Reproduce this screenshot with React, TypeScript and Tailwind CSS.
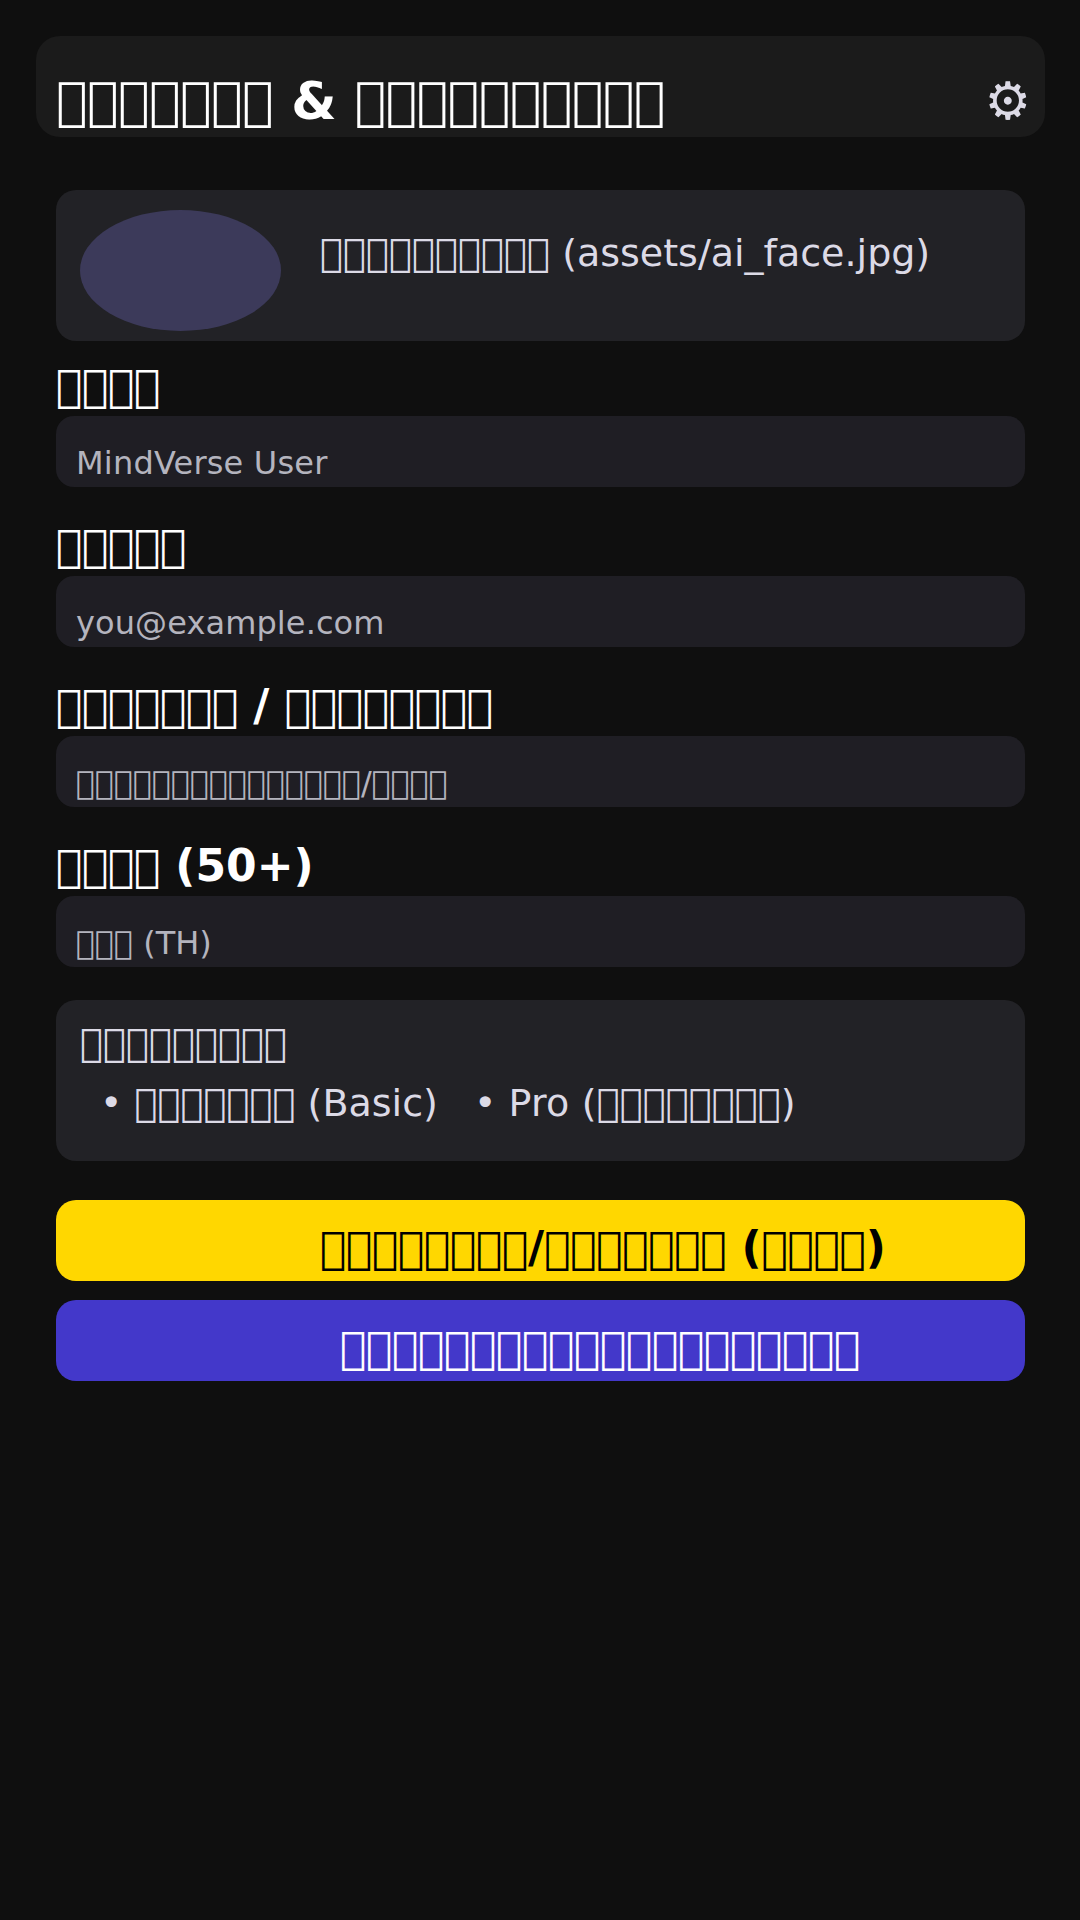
import type { ReactNode } from "react";

// A run of n missing-glyph boxes, drawn by the font itself.
function Boxes({ n, className }: { n: number; className: string }) {
  return <span className={className}>{"\uF8F0".repeat(n)}</span>;
}

const XL = "tracking-[-0.2px]";
const LG = "tracking-[-0.4px]";
const MD = "tracking-[0.2px]";
const SM = "tracking-[-0.2px]";

type FieldProps = { label: ReactNode; value: ReactNode };

function Field({ label, value }: FieldProps) {
  return (
    <div className="mb-[33px]">
      <div className="mb-1 h-[52px] text-[44px] leading-[52px] font-bold text-white">{label}</div>
      <div className="h-[71px] rounded-[18px] bg-[#1f1e24] pt-[27px] pl-5 text-[32px] leading-[40px] text-[#b4b4be]">
        {value}
      </div>
    </div>
  );
}

export default function App() {
  return (
    <div className="h-[1920px] w-[1080px] overflow-hidden bg-[#0f0f0f] pt-9 font-['DejaVu_Sans',sans-serif] whitespace-pre">
      <header className="mx-9 flex h-[101px] w-[1009px] justify-between rounded-[24px] bg-[#1b1b1b] pr-[14px] pl-5">
        <h1 className="mt-[35px] text-[52px] leading-[60px] font-bold text-white">
          <Boxes n={7} className={XL} />
          {" & "}
          <Boxes n={10} className={XL} />
        </h1>
        <button className="mt-[35px] flex h-[60px] text-[52px] leading-[60px] text-[#dcdae6]">⚙</button>
      </header>

      <main className="ml-14 w-[969px] pt-[53px]">
        <section className="mb-[19px] flex h-[151px] rounded-[20px] bg-[#222226] pt-5 pl-6 text-[38px] leading-[46px] text-[#dcdae6]">
          <div className="mr-[39px] h-[121px] w-[201px] shrink-0 rounded-[50%] bg-[#3c3a5a]" />
          <p className="pt-5">
            <Boxes n={10} className={MD} />
            {" (assets/ai_face.jpg)"}
          </p>
        </section>

        <Field label={<Boxes n={4} className={LG} />} value={<span className="tracking-[0.2px]">MindVerse User</span>} />
        <Field label={<Boxes n={5} className={LG} />} value={<span className="tracking-[0.1px]">you@example.com</span>} />
        <Field
          label={
            <>
              <Boxes n={7} className={LG} />
              {" / "}
              <Boxes n={8} className={LG} />
            </>
          }
          value={
            <>
              <Boxes n={15} className={SM} />/<Boxes n={4} className={SM} />
            </>
          }
        />
        <Field
          label={
            <>
              <Boxes n={4} className={LG} />
              {" (50+)"}
            </>
          }
          value={
            <>
              <Boxes n={3} className={SM} />
              {" (TH)"}
            </>
          }
        />

        <section className="mb-[39px] h-[161px] rounded-[20px] bg-[#222226] pt-5 pl-6 text-[38px] leading-[46px] text-[#dcdae6]">
          <h2>
            <Boxes n={9} className={MD} />
          </h2>
          <p className="mt-[14px] pl-5">
            {"• "}
            <Boxes n={7} className={MD} />
            {" (Basic)   • "}
            <span className="tracking-[0.2px]">{"Pro ("}</span>
            <Boxes n={8} className={MD} />)
          </p>
        </section>

        <button className="mb-[19px] block h-[81px] w-full rounded-[20px] bg-[#ffd700] pt-[22px] pb-[7px] pl-[264px] text-left text-[44px] leading-[52px] font-bold text-black">
          <Boxes n={8} className={LG} />/<Boxes n={7} className={LG} />
          {" ("}
          <Boxes n={4} className={LG} />)
        </button>
        <button className="block h-[81px] w-full rounded-[20px] bg-[#4338ca] pt-[22px] pb-[7px] pl-[284px] text-left text-[44px] leading-[52px] font-bold text-white">
          <Boxes n={20} className={LG} />
        </button>
      </main>
    </div>
  );
}
